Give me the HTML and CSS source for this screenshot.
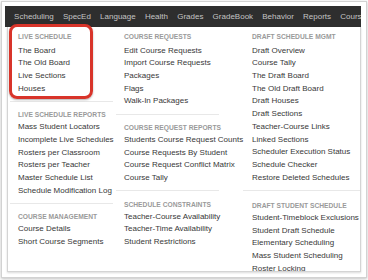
FILE: index.html
```html
<!doctype html>
<html lang="en">
<head>
	<meta charset="UTF-8">
	<title>Scheduling menu</title>
	<link rel="stylesheet" href="styles.css">
</head>
<body>
	<div class="frame">
		<ul class="nav">
			<li>Scheduling</li>
			<li>SpecEd</li>
			<li>Language</li>
			<li>Health</li>
			<li>Grades</li>
			<li>GradeBook</li>
			<li>Behavior</li>
			<li>Reports</li>
			<li>Courses</li>
		</ul>
		<div class="menu">
			<div class="col col1">
				<div class="sec">
					<h4>Live Schedule</h4>
					<a>The Board</a>
					<a>The Old Board</a>
					<a>Live Sections</a>
					<a>Houses</a>
				</div>
				<div class="sec">
					<h4>Live Schedule Reports</h4>
					<a>Mass Student Locators</a>
					<a>Incomplete Live Schedules</a>
					<a>Rosters per Classroom</a>
					<a>Rosters per Teacher</a>
					<a>Master Schedule List</a>
					<a>Schedule Modification Log</a>
				</div>
				<div class="sec last">
					<h4>Course Management</h4>
					<a>Course Details</a>
					<a>Short Course Segments</a>
				</div>
			</div>
			<div class="col col2">
				<div class="sec">
					<h4>Course Requests</h4>
					<a>Edit Course Requests</a>
					<a>Import Course Requests</a>
					<a>Packages</a>
					<a>Flags</a>
					<a>Walk-In Packages</a>
				</div>
				<div class="sec">
					<h4>Course Request Reports</h4>
					<a>Students Course Request Counts</a>
					<a>Course Requests By Student</a>
					<a>Course Request Conflict Matrix</a>
					<a>Course Tally</a>
				</div>
				<div class="sec last">
					<h4>Schedule Constraints</h4>
					<a>Teacher-Course Availability</a>
					<a>Teacher-Time Availability</a>
					<a>Student Restrictions</a>
				</div>
			</div>
			<div class="col col3">
				<div class="sec">
					<h4>Draft Schedule Mgmt</h4>
					<a>Draft Overview</a>
					<a>Course Tally</a>
					<a>The Draft Board</a>
					<a>The Old Draft Board</a>
					<a>Draft Houses</a>
					<a>Draft Sections</a>
					<a>Teacher-Course Links</a>
					<a>Linked Sections</a>
					<a>Scheduler Execution Status</a>
					<a>Schedule Checker</a>
					<a>Restore Deleted Schedules</a>
				</div>
				<div class="sec last">
					<h4>Draft Student Schedule</h4>
					<a>Student-Timeblock Exclusions</a>
					<a>Student Draft Schedule</a>
					<a>Elementary Scheduling</a>
					<a>Mass Student Scheduling</a>
					<a>Roster Locking</a>
				</div>
			</div>
		</div>
	</div>
	<!-- annotation drawn over the first section -->
	<div class="callout"></div>
</body>
</html>
```

FILE: styles.css
```css
html,body{ margin: 0; padding: 0; background: #fff;}
body{ font-family: "Liberation Sans", Arial, sans-serif; font-size: 8px; color: #333; width: 368px; height: 280px; overflow: hidden; position: relative;}
.frame{ box-sizing: border-box; width: 366px; height: 277px; margin: 1px 0 0 1px; padding: 4px 5px 0 3px; border: 1px solid #d2d2d2; box-shadow: 0 1px 3px rgba(0,0,0,.25); background: #fff;}
.nav{ display: flex; align-items: center; height: 21px; margin: 0; padding: 0 0 0 4.5px; list-style: none; background: #2e2e2e; white-space: nowrap; overflow: hidden;}
.nav li{ padding: 0 4.6px; color: #c4c4c4; line-height: 21px;}
.menu{ box-sizing: border-box; display: flex; width: 354px; height: 245px; margin-left: 2px; border: 1px solid #d4d4d4; border-top: none; box-shadow: 0 1px 2px rgba(0,0,0,.15); overflow: hidden; background: #fff;}
.col{ flex: none; white-space: nowrap;}
.col1{ width: 103px; margin-left: 2px;}
.col2{ width: 103px; margin-left: 3px;}
.col3{ width: 117px; margin-left: 24px;}
.sec{ padding: 6.3px 0 5.5px; border-bottom: 1px solid #e8e8e8;}
.sec:first-child{ padding-top: 2.5px;}
.sec:first-child h4{ margin-bottom: 2.15px;}
.sec.last{ border-bottom: none;}
.sec h4{ margin: 0; padding-left: 8px; font-size: 6.7px; line-height: 13px; font-weight: bold; color: #9a9a9a; text-transform: uppercase;}
.sec a{ display: block; padding-left: 8px; line-height: 12.7px; color: #383838;}
.col3 .sec h4,.col3 .sec a{ padding-left: 9px;}
.col3 .sec.last{ padding-top: 7.8px;}
.col3 .sec.last a{ line-height: 12.9px;}
.callout{ position: absolute; left: 9px; top: 24px; width: 84px; height: 75px; box-sizing: border-box; border: 3px solid #d8342a; border-radius: 8px; box-shadow: 0 1px 2px rgba(0,0,0,.3);}
```
